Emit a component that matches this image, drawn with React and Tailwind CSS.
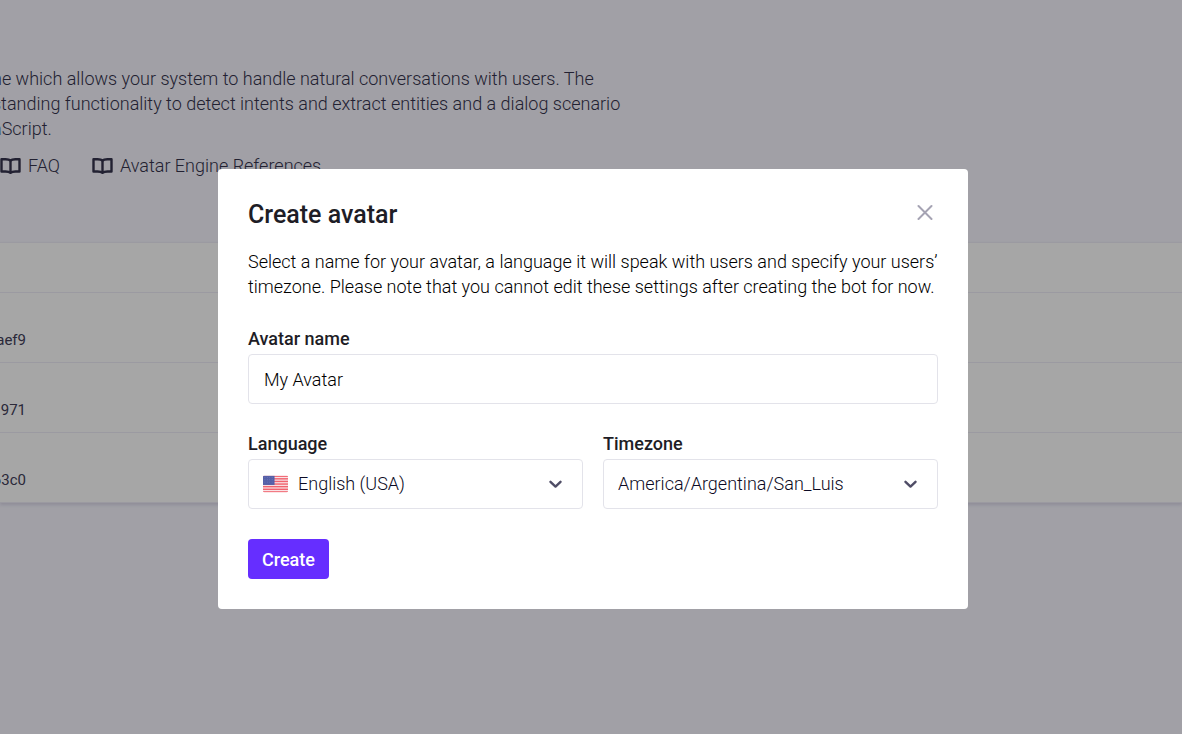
import React, { useState } from "react";

const INTRO = [
  "ne which allows your system to handle natural conversations with users. The",
  "standing functionality to detect intents and extract entities and a dialog scenario",
  "aScript.",
];

const AVATARS = ["aef9", "1971", "63c0"];

function BookIcon() {
  return (
    <svg width="22" height="18" viewBox="0 0 22 18" fill="none" stroke="currentColor" strokeWidth="2.4" strokeLinejoin="round" aria-hidden="true">
      <path d="M10.500 3.500C9.400 2.500 7.600 2.200 5.600 2.200H1.500v12.300h4c2 0 3.900.2 5 1.300 1.100-1.100 3-1.300 5-1.300h4V2.200h-4.100C13.400 2.200 11.600 2.500 10.500 3.500Z" />
      <path d="M10.500 3.500V15.500" />
    </svg>
  );
}

function CloseIcon() {
  return (
    <svg width="16" height="16" viewBox="0 0 16 16" fill="none" stroke="currentColor" strokeWidth="2" strokeLinecap="round" aria-hidden="true">
      <path d="M1.500 2l13 13M14.500 2l-13 13" />
    </svg>
  );
}

function Chevron() {
  return (
    <svg className="pointer-events-none absolute right-5 top-1/2 -translate-y-1/2 text-[#4f4d66]" width="14" height="10" viewBox="0 0 14 10" fill="none" stroke="currentColor" strokeWidth="2.400" strokeLinecap="round" strokeLinejoin="round" aria-hidden="true">
      <path d="M1.500 2.800l5 4.800 5-4.800" />
    </svg>
  );
}

function Flag() {
  return (
    <svg className="pointer-events-none absolute left-[15px] top-1/2 -translate-y-1/2" width="25" height="17" viewBox="0 0 26 18" preserveAspectRatio="none" aria-hidden="true">
      <clipPath id="flag-shape">
        <rect width="26" height="18" rx="1.500" />
      </clipPath>
      <g clipPath="url(#flag-shape)">
        <rect width="26" height="18" fill="#f9e3e6" />
        {[0, 1, 2, 3, 4, 5, 6].map((i) => (
          <rect key={i} y={i * 2.77} width="26" height="1.500" fill="#f0626e" />
        ))}
        <rect width="12" height="10" fill="#5560a8" />
        <g fill="#7f88c2">
          {[2, 4.500, 7, 9.500].map((x) => [2, 4.500, 7].map((y) => <circle key={x + "-" + y} cx={x} cy={y} r="0.500" />))}
        </g>
      </g>
    </svg>
  );
}

function Field({ id, label, children }) {
  return (
    <div className="flex min-w-0 flex-1 flex-col gap-[5px]">
      <label htmlFor={id} className="text-lg leading-5 font-medium">{label}</label>
      {children}
    </div>
  );
}

const selectStyle = "h-[50px] w-full appearance-none rounded border border-[#e3e3ea] bg-white pr-12 text-lg font-light text-[#0c0a24] outline-none";

export default function App() {
  const [name, setName] = useState("My Avatar");
  return (
    <div className="min-h-screen overflow-hidden bg-[#f7f6ff] font-['Roboto',sans-serif] text-[#35334d]">
      <main className="pt-[66px]">
        <div className="-ml-2 text-lg leading-[25px] font-light whitespace-nowrap">
          {INTRO.map((line) => (
            <p key={line}>{line}</p>
          ))}
        </div>
        <nav className="mt-3 flex gap-8 text-lg leading-[25px] font-light">
          <a href="#faq" className="flex items-center gap-1.5"><BookIcon />FAQ</a>
          <a href="#references" className="flex items-center gap-1.5"><BookIcon />Avatar Engine References</a>
        </nav>
        <table className="mt-16 w-full border-collapse bg-white text-[15px] text-[#424059] shadow-[0_2px_3px_rgba(60,50,110,0.15)]">
          <thead>
            <tr className="h-[50px] border-y border-[#eeedf8]"><th aria-label="Avatar" /></tr>
          </thead>
          <tbody>
            {AVATARS.map((id) => (
              <tr key={id} className="h-[70px] border-b border-[#eeedf8]">
                <td className="pt-[26px]"><div className="flex w-[26px] justify-end">{id}</div></td>
              </tr>
            ))}
          </tbody>
        </table>
      </main>

      <div className="fixed inset-0 flex items-start justify-center overflow-auto bg-black/35 pt-[169px] pl-1">
        <section role="dialog" aria-modal="true" aria-labelledby="dialog-title" className="w-full max-w-[750px] rounded bg-white p-[30px] text-[#1e1d26]">
          <header className="flex items-start justify-between">
            <h1 id="dialog-title" className="text-[25px] leading-8 font-medium">Create avatar</h1>
            <button type="button" aria-label="Close" className="p-[5px] text-[#a5a3b3]"><CloseIcon /></button>
          </header>
          <p className="mt-[18px] text-lg leading-[25px] font-light text-black">
            Select a name for your avatar, a language it will speak with users and specify your users’ timezone. Please note that you cannot edit these settings after creating the bot for now.
          </p>
          <form className="mt-[30px] flex flex-col gap-[30px]" onSubmit={(e) => e.preventDefault()}>
            <Field id="name" label="Avatar name">
              <input id="name" value={name} onChange={(e) => setName(e.target.value)} className="h-[50px] w-full rounded border border-[#e3e3ea] px-[15px] text-lg font-light text-black outline-none" />
            </Field>
            <div className="flex gap-5">
              <Field id="language" label="Language">
                <div className="relative">
                  <select id="language" className={selectStyle + " pl-[49px]"}>
                    <option>English (USA)</option>
                  </select>
                  <Flag />
                  <Chevron />
                </div>
              </Field>
              <Field id="timezone" label="Timezone">
                <div className="relative">
                  <select id="timezone" className={selectStyle + " pl-3.5"}>
                    <option>America/Argentina/San_Luis</option>
                  </select>
                  <Chevron />
                </div>
              </Field>
            </div>
            <button type="submit" className="h-10 self-start rounded bg-[#662eff] px-3.5 pt-0.5 text-lg font-medium text-white">Create</button>
          </form>
        </section>
      </div>
    </div>
  );
}
